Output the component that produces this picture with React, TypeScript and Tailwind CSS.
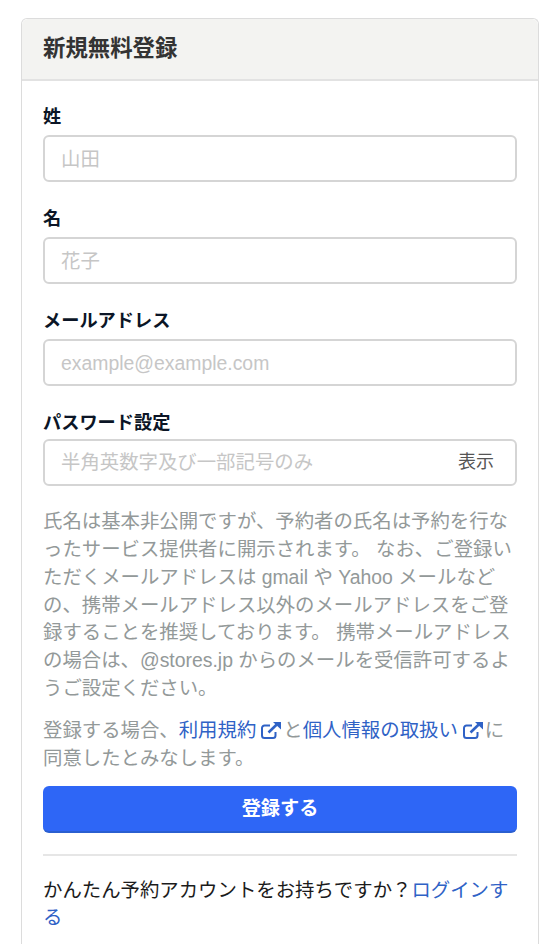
import React from "react";

function ExtIcon() {
  return (
    <svg viewBox="0 0 20 17" className="inline-block w-[20px] h-[17px] align-[-2px] ml-[5px] mr-[2px]" fill="none" stroke="currentColor">
      <path d="M14.500 10v3.500a2.500 2.500 0 0 1-2.500 2.500H3.500A2.500 2.500 0 0 1 1 13.500V6A2.500 2.500 0 0 1 3.500 3.500H9" strokeWidth="2" />
      <path d="M7.500 10.500 15.500 2.800" strokeWidth="2.600" />
      <path d="M12 0h8v7.500z" fill="currentColor" stroke="none" />
    </svg>
  );
}

function Field({ label, placeholder }: { label: string; placeholder: string }) {
  return (
    <div className="mb-[24px]">
      <label className="block mb-[4px] text-[18.2px] leading-[27px] font-bold text-[#0b1526]">{label}</label>
      <input
        placeholder={placeholder}
        className="block w-full h-[47px] px-[16px] pt-[1px] text-[19.4px] rounded-[6px] border-2 border-[#d5d5d5] bg-white outline-none placeholder:text-[#c6c6c6]"
      />
    </div>
  );
}

export default function App() {
  return (
    <div className="h-[944px] flex flex-col overflow-hidden bg-white pt-[18px] px-[21px] text-[19.4px] leading-[27.84px] font-['Liberation_Sans','Noto_Sans_CJK_JP',sans-serif]">
      <div className="flex-1 border border-[#dcdcdc] rounded-t-[6px] border-b-0">
        <div className="h-[62px] bg-[#f3f3f1] border-b-2 border-[#e2e2e2] rounded-t-[6px] px-[21px] flex items-center">
          <h1 className="text-[22.4px] font-bold text-[#333333]">新規無料登録</h1>
        </div>
        <div className="px-[21px] pt-[23px]">
          <Field label="姓" placeholder="山田" />
          <Field label="名" placeholder="花子" />
          <Field label="メールアドレス" placeholder="example@example.com" />
          <div className="mb-[22px]">
            <label className="block mb-[2px] text-[18.2px] leading-[27px] font-bold text-[#0b1526]">パスワード設定</label>
            <div className="flex items-center h-[47px] rounded-[6px] border-2 border-[#d5d5d5] pl-[16px] pr-[21px]">
              <input
                placeholder="半角英数字及び一部記号のみ"
                className="flex-1 min-w-0 text-[19.4px] outline-none placeholder:text-[#c6c6c6]"
              />
              <span className="text-[18px] text-[#555555]">表示</span>
            </div>
          </div>
          <p className="text-[#939999] mb-[14px]">
            氏名は基本非公開ですが、予約者の氏名は予約を行なったサービス提供者に開示されます。 なお、ご登録いただくメールアドレスは gmail や Yahoo メールなどの、携帯メールアドレス以外のメールアドレスをご登録することを推奨しております。 携帯メールアドレスの場合は、@stores.jp からのメールを受信許可するようご設定ください。
          </p>
          <p className="text-[#939999] mb-[13px]">
            登録する場合、<a className="text-[#2f62c6]">利用規約<ExtIcon /></a>と<a className="text-[#2f62c6]">個人情報の取扱い<ExtIcon /></a>に同意したとみなします。
          </p>
          <button className="block w-full h-[47px] pt-[2px] rounded-[6px] bg-[#2e66f6] border-b-2 border-[#2a5fd0] text-white font-bold text-[19.2px]">登録する</button>
          <hr className="mt-[21px] mb-[21px] border-t-2 border-[#e6e6e6]" />
          <p className="text-[#1b1b1b]">
            かんたん予約アカウントをお持ちですか？<a className="text-[#2f62c6]">ログインする</a>
          </p>
        </div>
      </div>
    </div>
  );
}
